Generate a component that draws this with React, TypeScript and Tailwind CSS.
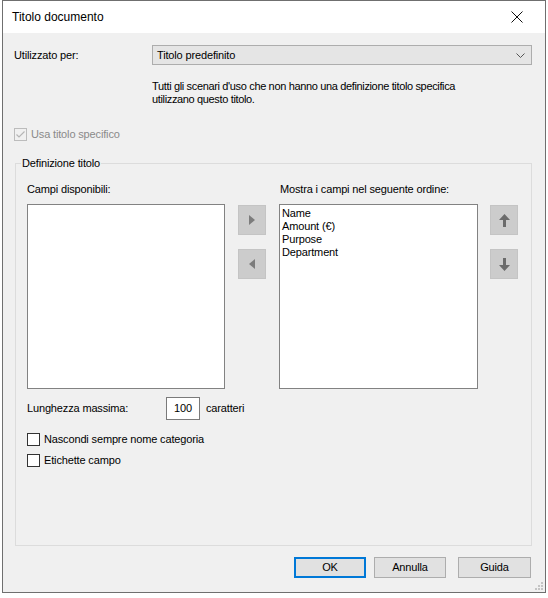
import React from 'react';

const FONT = '"Liberation Sans", Arial, sans-serif';

const Checkbox = ({ label, checked, disabled }: { label: string; checked?: boolean; disabled?: boolean }) => (
  <div className="flex items-center h-[13px]">
    <span
      className={
        'flex items-center justify-center w-[13px] h-[13px] border ' +
        (disabled ? 'border-[#bcbcbc] bg-[#f0f0f0]' : 'border-[#333333] bg-white')
      }
    >
      {checked && (
        <svg width="11" height="11" viewBox="0 0 11 11">
          <path d="M1.5 5.5 L4 8 L9.5 2.5" fill="none" stroke={disabled ? '#b5b5b5' : '#000'} strokeWidth="1.2" />
        </svg>
      )}
    </span>
    <span className={'ml-[4px] whitespace-nowrap ' + (disabled ? 'text-[#8a8a8a]' : 'text-black')}>{label}</span>
  </div>
);

const SideButton = ({ children }: { children: React.ReactNode }) => (
  <div className="flex items-center justify-center w-[28px] h-[30px] bg-[#cccccc] border border-[#c4c4c4]">{children}</div>
);

const Button = ({ label, primary, className }: { label: string; primary?: boolean; className?: string }) => (
  <div
    className={
      'flex items-center justify-center h-[21px] w-[72px] bg-[#e1e1e1] ' +
      (primary ? 'border-2 border-[#0078d7]' : 'border border-[#adadad]') +
      ' ' +
      (className ?? '')
    }
  >
    {label}
  </div>
);

export default function App() {
  return (
    <div
      className="w-[548px] h-[598px] bg-white text-[11px] leading-[13px] tracking-[-0.15px] text-black"
      style={{ fontFamily: FONT }}
    >
      <div className="ml-[2px] w-[544px] h-[593px] border border-[#6f6f6f] flex flex-col">
        {/* title bar */}
        <div className="h-[32px] bg-white flex items-center justify-between pl-[9px] pr-[22px]">
          <span className="text-[12px] tracking-normal">Titolo documento</span>
          <svg width="12" height="12" viewBox="0 0 12 12">
            <path d="M0.5 0.5 L11.5 11.5 M11.5 0.5 L0.5 11.5" stroke="#111" strokeWidth="1" fill="none" />
          </svg>
        </div>

        {/* body */}
        <div className="flex-1 bg-[#f0f0f0] flex flex-col relative">
          <div className="flex items-center mt-[12px] pl-[11px]">
            <span className="w-[138px]">Utilizzato per:</span>
            <div className="w-[380px] h-[20px] bg-[#e5e5e5] border border-[#adadad] flex items-center justify-between pl-[4px] pr-[6px]">
              <span>Titolo predefinito</span>
              <svg width="9" height="5" viewBox="0 0 9 5">
                <path d="M0.5 0.5 L4.5 4.5 L8.5 0.5" stroke="#555" strokeWidth="1" fill="none" />
              </svg>
            </div>
          </div>

          <div className="ml-[149px] mt-[15px] tracking-[-0.35px]">
            <div>Tutti gli scenari d'uso che non hanno una definizione titolo specifica</div>
            <div>utilizzano questo titolo.</div>
          </div>

          <div className="ml-[11px] mt-[22px]">
            <Checkbox label="Usa titolo specifico" checked disabled />
          </div>

          {/* group box */}
          <div className="relative ml-[12px] mt-[22px] w-[517px] h-[383px] border border-[#dcdcdc]">
            <span className="absolute left-[5px] top-[-7px] bg-[#f0f0f0] px-[1px]">Definizione titolo</span>

            <div className="flex pl-[11px] pt-[19px]">
              <div className="flex flex-col w-[198px]">
                <span className="h-[14px] whitespace-nowrap">Campi disponibili:</span>
                <div className="mt-[7px] h-[185px] bg-white border border-[#828282]" />
              </div>

              <div className="flex flex-col ml-[13px] pt-[22px] gap-[14px]">
                <SideButton>
                  <svg width="6" height="10" viewBox="0 0 6 10">
                    <path d="M0 0 L6 5 L0 10 Z" fill="#7c7c7c" />
                  </svg>
                </SideButton>
                <SideButton>
                  <svg width="6" height="10" viewBox="0 0 6 10">
                    <path d="M6 0 L0 5 L6 10 Z" fill="#7c7c7c" />
                  </svg>
                </SideButton>
              </div>

              <div className="flex flex-col w-[199px] ml-[13px]">
                <span className="h-[14px] pl-[1px] whitespace-nowrap">Mostra i campi nel seguente ordine:</span>
                <div className="mt-[7px] h-[185px] bg-white border border-[#828282] pl-[2px] pt-[2px] flex flex-col">
                  <span>Name</span>
                  <span>Amount (€)</span>
                  <span>Purpose</span>
                  <span>Department</span>
                </div>
              </div>

              <div className="flex flex-col ml-[12px] pt-[22px] gap-[14px]">
                <SideButton>
                  <svg width="11" height="13" viewBox="0 0 11 13">
                    <path d="M5.5 0 L11 6 L7 6 L7 13 L4 13 L4 6 L0 6 Z" fill="#6b6b6b" />
                  </svg>
                </SideButton>
                <SideButton>
                  <svg width="11" height="13" viewBox="0 0 11 13">
                    <path d="M5.5 13 L11 7 L7 7 L7 0 L4 0 L4 7 L0 7 Z" fill="#6b6b6b" />
                  </svg>
                </SideButton>
              </div>
            </div>

            <div className="flex items-center pl-[11px] mt-[8px]">
              <span className="w-[139px]">Lunghezza massima:</span>
              <div className="w-[34px] h-[23px] bg-white border border-[#7a7a7a] flex items-center justify-center">100</div>
              <span className="ml-[6px]">caratteri</span>
            </div>

            <div className="pl-[11px] mt-[13px]">
              <Checkbox label="Nascondi sempre nome categoria" />
            </div>
            <div className="pl-[11px] mt-[8px]">
              <Checkbox label="Etichette campo" />
            </div>
          </div>

          <div className="flex mt-[11px] pr-[14px]">
            <Button label="OK" primary className="ml-auto" />
            <Button label="Annulla" className="ml-[8px]" />
            <Button label="Guida" className="ml-[12px] w-[73px]" />
          </div>

          <svg className="absolute right-[1px] bottom-[1px]" width="9" height="9" viewBox="0 0 9 9">
            <rect x="6" y="0" width="2" height="2" fill="#c4c4c4" />
            <rect x="3" y="3" width="2" height="2" fill="#c4c4c4" />
            <rect x="6" y="3" width="2" height="2" fill="#c4c4c4" />
            <rect x="0" y="6" width="2" height="2" fill="#c4c4c4" />
            <rect x="3" y="6" width="2" height="2" fill="#c4c4c4" />
            <rect x="6" y="6" width="2" height="2" fill="#c4c4c4" />
          </svg>
        </div>
      </div>
    </div>
  );
}
